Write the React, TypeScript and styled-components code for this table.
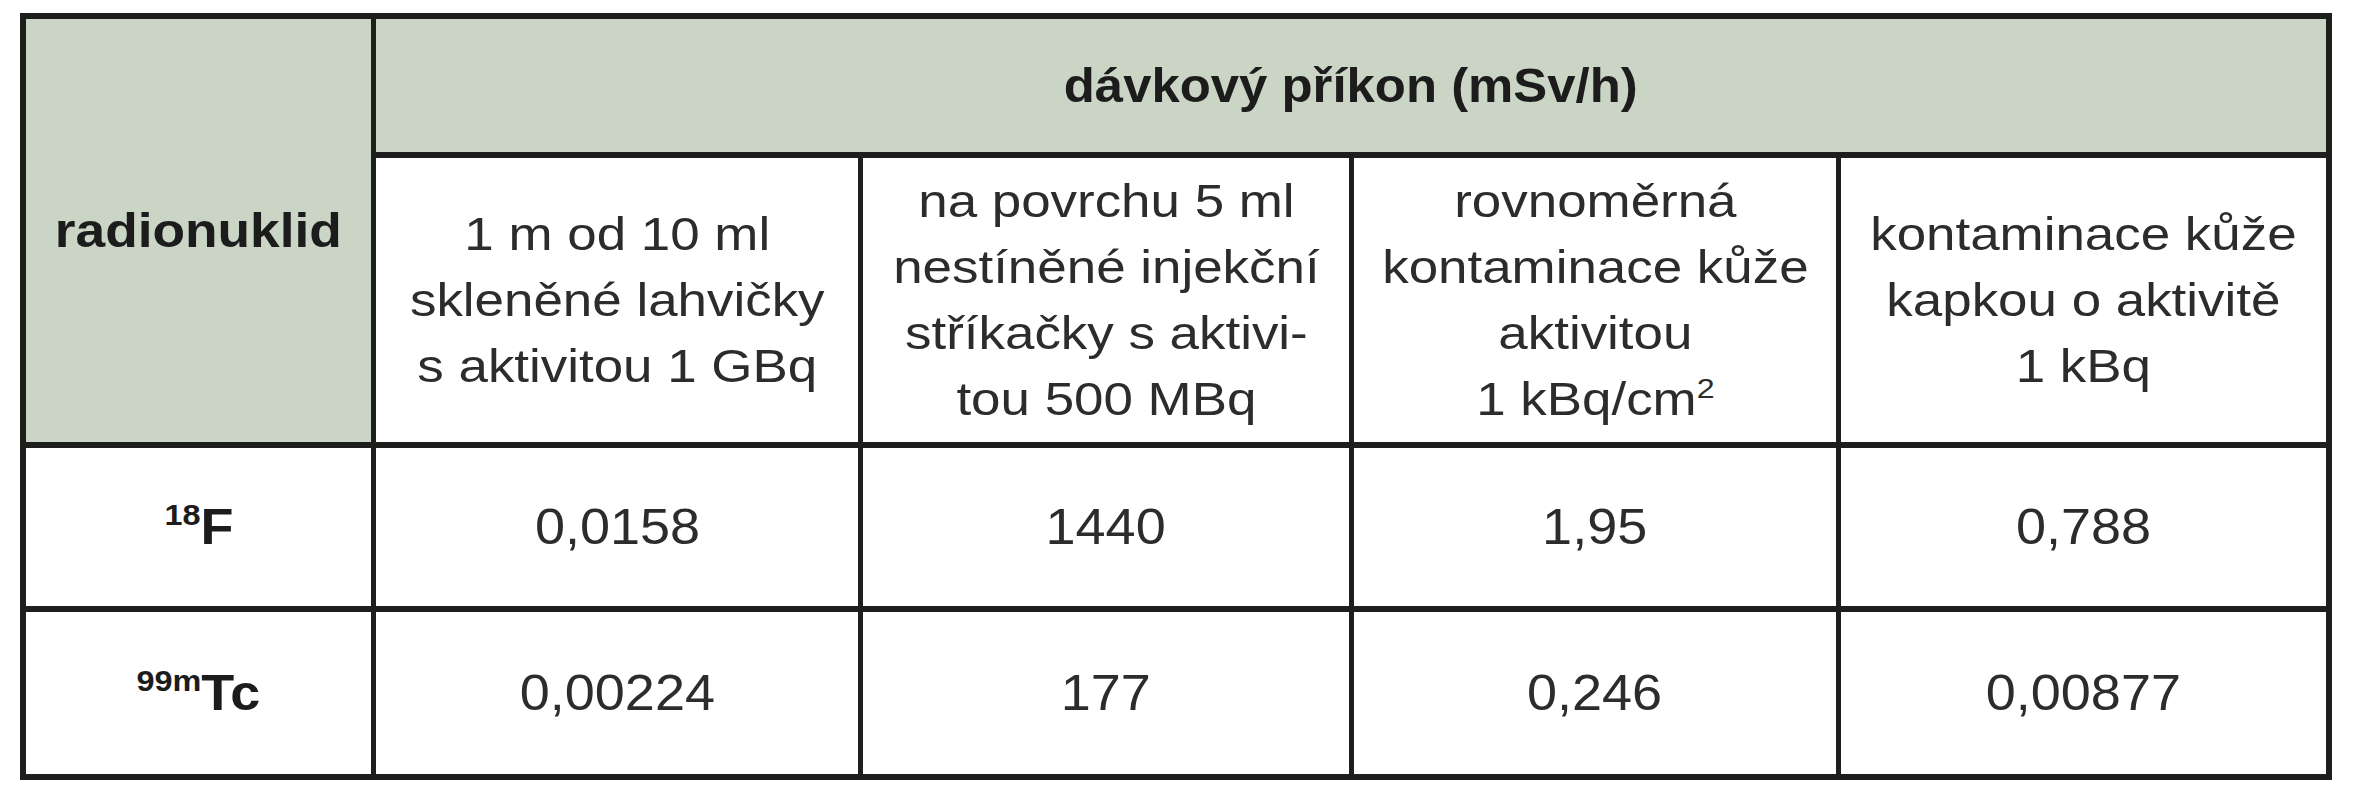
import React from 'react'
import styled, { createGlobalStyle } from 'styled-components'

const GlobalStyle = createGlobalStyle`
  html, body {
    margin: 0;
    padding: 0;
    background: #ffffff;
  }
  body {
    font-family: "Liberation Sans", Arial, sans-serif;
    color: #2a2a2a;
  }
`

const Page = styled.div`
  padding: 13px 0 0 20px;
`

// the dark lines of the table are the grid's background showing through the gaps
const Table = styled.div`
  display: grid;
  grid-template-columns: 345px 482px 486px 482px 485px;
  grid-template-rows: 133px 284px 158px 162px;
  column-gap: 5px;
  row-gap: 6px;
  padding: 6px;
  width: max-content;
  background: #1e1e1c;
`

const Cell = styled.div<{ $head?: boolean; $col?: string; $row?: string }>`
  display: flex;
  align-items: center;
  justify-content: center;
  text-align: center;
  background: ${({ $head }) => ($head ? '#cad5c6' : '#ffffff')};
  grid-column: ${({ $col }) => $col || 'auto'};
  grid-row: ${({ $row }) => $row || 'auto'};
  overflow: hidden;
`

const Text = styled.span<{ $size: number; $stretch: number; $bold?: boolean }>`
  display: inline-block;
  white-space: nowrap;
  font-size: ${({ $size }) => $size}px;
  line-height: 66px;
  font-weight: ${({ $bold }) => ($bold ? 700 : 400)};
  color: ${({ $bold }) => ($bold ? '#1c1c1c' : '#2c2c2c')};
  transform: scaleX(${({ $stretch }) => $stretch});
`

const Sup = styled.sup<{ $size: number; $lift: number }>`
  font-size: ${({ $size }) => $size}px;
  line-height: 1;
  vertical-align: ${({ $lift }) => $lift}px;
`

const Nuclide = ({ mass, symbol }: { mass: string; symbol: string }) => (
  <Text $size={50} $stretch={1.08} $bold>
    <Sup $size={30} $lift={19}>{mass}</Sup>
    {symbol}
  </Text>
)

const Lines = ({ lines }: { lines: React.ReactNode[] }) => (
  <Text $size={46} $stretch={1.15}>
    {lines.map((line, i) => (
      <React.Fragment key={i}>
        {i > 0 && <br />}
        {line}
      </React.Fragment>
    ))}
  </Text>
)

const columns: React.ReactNode[][] = [
  ['1 m od 10 ml', 'skleněné lahvičky', 's aktivitou 1 GBq'],
  ['na povrchu 5 ml', 'nestíněné injekční', 'stříkačky s aktivi-', 'tou 500 MBq'],
  [
    'rovnoměrná',
    'kontaminace kůže',
    'aktivitou',
    <>
      1 kBq/cm
      <Sup $size={28} $lift={17}>2</Sup>
    </>,
  ],
  ['kontaminace kůže', 'kapkou o aktivitě', '1 kBq'],
]

const rows = [
  { mass: '18', symbol: 'F', values: ['0,0158', '1440', '1,95', '0,788'] },
  { mass: '99m', symbol: 'Tc', values: ['0,00224', '177', '0,246', '0,00877'] },
]

export default function App() {
  return (
    <Page>
      <GlobalStyle />
      <Table>
        <Cell $head $row="1 / 3">
          <Text $size={48} $stretch={1.11} $bold>
            radionuklid
          </Text>
        </Cell>
        <Cell $head $col="2 / 6">
          <Text $size={48} $stretch={1.06} $bold>
            dávkový příkon (mSv/h)
          </Text>
        </Cell>
        {columns.map((lines, i) => (
          <Cell key={i}>
            <Lines lines={lines} />
          </Cell>
        ))}
        {rows.map((row) => (
          <React.Fragment key={row.symbol}>
            <Cell>
              <Nuclide mass={row.mass} symbol={row.symbol} />
            </Cell>
            {row.values.map((value, i) => (
              <Cell key={i}>
                <Text $size={50} $stretch={1.08}>
                  {value}
                </Text>
              </Cell>
            ))}
          </React.Fragment>
        ))}
      </Table>
    </Page>
  )
}
